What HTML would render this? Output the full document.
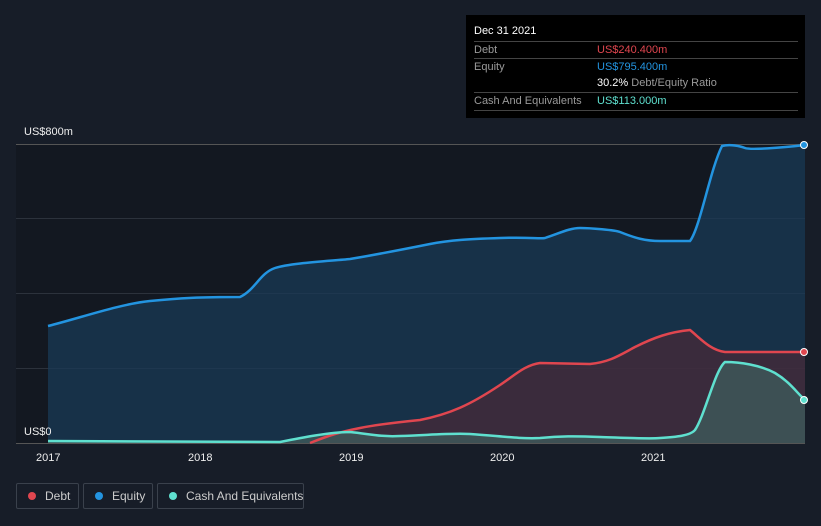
<!DOCTYPE html>
<html><head><style>
html,body{margin:0;width:821px;height:526px;background:#171d28;font-family:"Liberation Sans",sans-serif;overflow:hidden;position:relative}
.tip{position:absolute;left:466px;top:15px;width:339px;height:103px;background:#000;color:#fff;font-size:11px}
.row{position:absolute;left:8px;width:324px;border-top:1px solid #444;height:17px;line-height:17px}
.row span{position:absolute;left:123px;white-space:nowrap}
.gray{color:#9a9a9a}
.leg{position:absolute;top:483px;height:26px;border:1px solid #3a414c;border-radius:2px;color:#ccc;font-size:12px;line-height:24px;box-sizing:border-box;white-space:nowrap}
.leg i{position:absolute;left:11px;top:8px;width:8px;height:8px;border-radius:50%}
</style></head><body>
<svg width="821" height="526" style="position:absolute;left:0;top:0">
<rect x="16" y="144" width="789" height="299" fill="#131821"/>
<g stroke="#2c323c" stroke-width="1">
<line x1="16" y1="144.5" x2="805" y2="144.5" stroke="#555"/>
<line x1="16" y1="218.5" x2="805" y2="218.5"/>
<line x1="16" y1="293.5" x2="805" y2="293.5"/>
<line x1="16" y1="368.5" x2="805" y2="368.5"/>
<line x1="16" y1="443.5" x2="805" y2="443.5" stroke="#555"/>
</g>
<path d="M48,326 C80,318 120,304 150,301 S200,297 240,297 C255,290 260,273 275,268 S330,261 350,259 C380,254 410,248 430,244 S470,239 500,238 S540,239 545,238 C560,233 570,228 580,228 S615,230 620,232 C635,238 645,241 660,241 L690,241 C700,228 710,170 722,146 C730,144 740,146 745,148 S780,148 805,145 L805,443 L48,443Z" fill="#1a3a55" opacity="0.75"/>
<path d="M48,443 L310,443 C330,435 340,432 360,428 C380,424 400,422 420,420 C450,414 470,405 500,385 C515,375 525,365 540,363 L590,364 C610,362 620,355 635,347 C655,337 670,332 690,330 C700,338 710,350 725,352 L805,352 L805,443Z" fill="#4a2a38" opacity="0.7"/>
<path d="M48,441 L280,442 C300,438 330,432 350,432 C370,434 380,437 400,436 C430,435 450,433 470,434 C500,436 520,439 540,438 C560,436 575,436 600,437 C630,438 650,439 660,438 C675,437 690,436 695,430 C705,415 715,370 725,362 C740,362 760,365 775,373 C790,382 797,393 805,400 L805,443 L48,443Z" fill="#3f5a5a" opacity="0.8"/>
<path d="M48,326 C80,318 120,304 150,301 S200,297 240,297 C255,290 260,273 275,268 S330,261 350,259 C380,254 410,248 430,244 S470,239 500,238 S540,239 545,238 C560,233 570,228 580,228 S615,230 620,232 C635,238 645,241 660,241 L690,241 C700,228 710,170 722,146 C730,144 740,146 745,148 S780,148 805,145" fill="none" stroke="#2394e0" stroke-width="2.5"/>
<path d="M310,443 C330,435 340,432 360,428 C380,424 400,422 420,420 C450,414 470,405 500,385 C515,375 525,365 540,363 L590,364 C610,362 620,355 635,347 C655,337 670,332 690,330 C700,338 710,350 725,352 L805,352" fill="none" stroke="#e0464f" stroke-width="2.5"/>
<path d="M48,441 L280,442 C300,438 330,432 350,432 C370,434 380,437 400,436 C430,435 450,433 470,434 C500,436 520,439 540,438 C560,436 575,436 600,437 C630,438 650,439 660,438 C675,437 690,436 695,430 C705,415 715,370 725,362 C740,362 760,365 775,373 C790,382 797,393 805,400" fill="none" stroke="#5fe0cf" stroke-width="2.5"/>
<circle cx="804" cy="145" r="3.5" fill="#2394e0" stroke="#fff" stroke-width="1"/>
<circle cx="804" cy="352" r="3.5" fill="#e0464f" stroke="#fff" stroke-width="1"/>
<circle cx="804" cy="400" r="3.5" fill="#5fe0cf" stroke="#fff" stroke-width="1"/>
<g fill="#eee" font-size="11" font-family="Liberation Sans">
<text x="24" y="135">US$800m</text>
<text x="24" y="435">US$0</text>
<text x="36" y="461">2017</text><text x="188" y="461">2018</text><text x="339" y="461">2019</text><text x="490" y="461">2020</text><text x="641" y="461">2021</text>
</g>
</svg>
<div class="tip">
<div style="position:absolute;left:8px;top:10px">Dec 31 2021</div>
<div class="row gray" style="top:26px">Debt<span style="color:#e0464f">US$240.400m</span></div>
<div class="row gray" style="top:43px">Equity<span style="color:#2394e0">US$795.400m</span></div>
<div class="row gray" style="top:60px;border:0"><span><b style="color:#fff;font-weight:normal">30.2%</b> Debt/Equity Ratio</span></div>
<div class="row gray" style="top:77px">Cash And Equivalents<span style="color:#5fe0cf">US$113.000m</span></div>
<div class="row" style="top:95px;height:0"></div>
</div>
<div class="leg" style="left:16px;width:63px"><i style="background:#e0464f"></i><span style="position:absolute;left:28px">Debt</span></div>
<div class="leg" style="left:83px;width:70px"><i style="background:#2394e0"></i><span style="position:absolute;left:28px">Equity</span></div>
<div class="leg" style="left:157px;width:147px"><i style="background:#5fe0cf"></i><span style="position:absolute;left:28px">Cash And Equivalents</span></div>
</body></html>
